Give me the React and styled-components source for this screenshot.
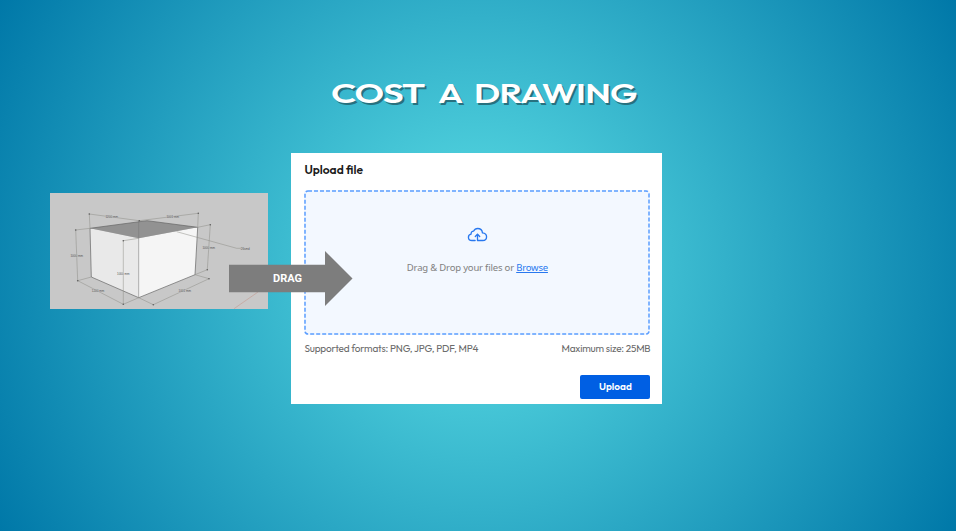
import React from "react";
import styled, { createGlobalStyle } from "styled-components";

const GlobalStyle = createGlobalStyle`
  * { box-sizing: border-box; }
  body { margin: 0; overflow: hidden; }
`;

const Stage = styled.main`
  display: flex;
  flex-direction: column;
  width: 956px;
  height: 531px;
  padding-top: 79px;
  background: radial-gradient(circle farthest-corner at 50% 50%, #5de0e6 0%, #0078a8 100%);
  font-family: Outfit, Lato, "Open Sans", sans-serif;
`;

const Title = styled.h1`
  display: flex;
  gap: 13px;
  height: 30px;
  margin: 0 0 44px 331px;
  font: 600 25.5px/30px Outfit, Inter, sans-serif;
  letter-spacing: -0.5px;
  color: #fff;
  text-shadow: 1.3px 2px 0 #27717f;
`;

const Word = styled.span`
  width: ${(p) => p.$width}px;
  white-space: nowrap;
  transform: scaleX(${(p) => p.$stretch});
  transform-origin: 0 50%;
`;

const Scene = styled.section`
  display: flex;
  align-items: flex-start;
  gap: 23px;
  padding-left: 50px;
`;

const Preview = styled.figure`
  position: relative;
  width: 218px;
  height: 116px;
  margin: 40px 0 0;
  background: #c8c8c8;
`;

const Drawing = styled.svg`
  display: block;
  width: 218px;
  height: 116px;
`;

const Dimension = styled.text`
  font: 3px "Liberation Sans", sans-serif;
  text-anchor: middle;
  fill: #555;
  stroke: ${(p) => p.$halo};
  stroke-width: 0.5px;
  paint-order: stroke;
`;

const DragArrow = styled.div`
  position: absolute;
  z-index: 2;
  left: 179px;
  top: 58px;
  display: flex;
  align-items: center;
  width: 124px;
  height: 55px;
  padding-left: 44px;
  background: #7d7d7d;
  clip-path: polygon(0 13.8px, 96px 13.8px, 96px 0, 123.5px 27.5px, 96px 55px, 96px 41.2px, 0 41.2px);
  font: 700 11px/14px Roboto, sans-serif;
  color: #fff;
`;

const Card = styled.div`
  display: flex;
  flex-direction: column;
  width: 371px;
  height: 251px;
  padding: 9px 11.6px 5px 13.4px;
  background: #fff;
`;

const Heading = styled.h2`
  margin: 0 0 13px;
  font-size: 12px;
  font-weight: 600;
  line-height: 15px;
  color: #1b1b1b;
`;

const DropZone = styled.div`
  position: relative;
  display: flex;
  flex-direction: column;
  align-items: center;
  height: 145px;
  padding-top: 37px;
  background: #f3f8ff;
  border-radius: 3px;
`;

const DashedEdge = styled.svg`
  position: absolute;
  inset: 0;
  width: 346px;
  height: 145px;
`;

const Cloud = styled.svg`
  width: 21px;
  height: 16px;
`;

const Prompt = styled.p`
  margin: 17px 0 0;
  font: 400 9.5px/15px "Noto Sans", sans-serif;
  letter-spacing: -0.18px;
  color: #808080;
`;

const Browse = styled.a`
  color: #2878ef;
  text-decoration: underline;
  text-underline-offset: 1px;
`;

const Hints = styled.div`
  display: flex;
  justify-content: space-between;
  margin-top: 7px;
  font-size: 10px;
  line-height: 14px;
  letter-spacing: -0.19px;
  color: #6c6c6c;
`;

const UploadButton = styled.button`
  align-self: flex-end;
  width: 70px;
  height: 24px;
  margin-top: auto;
  padding: 0;
  border: 0;
  border-radius: 2px;
  background: #005fe3;
  font: 600 10px/24px Outfit, Lato, sans-serif;
  color: #fff;
`;

const labels = [
  [61.7, 25.3, "1200 mm"],
  [122.7, 25, "1001 mm"],
  [26.7, 64, "1000 mm"],
  [73.3, 81.7, "1000 mm", "#e9e9e9"],
  [158.7, 56, "1000 mm"],
  [48, 99.3, "1200 mm"],
  [134.8, 98.5, "1001 mm"],
  [195.3, 56.7, "26smd"],
];

const ends = [
  [39.3, 21], [89.3, 27.7], [148.3, 20.3], [25.7, 37], [27.7, 87.7], [73.3, 47.7],
  [73.3, 111.3], [103.3, 111.7], [159, 85.7], [160.3, 31.7], [157.3, 76.7],
];

export default function App() {
  return (
    <Stage>
      <GlobalStyle />
      <Title>
        <Word $width={94} $stretch={1.45}>COST</Word>
        <Word $width={23} $stretch={1.38}>A</Word>
        <Word $width={163} $stretch={1.38}>DRAWING</Word>
      </Title>
      <Scene>
        <Preview>
          <Drawing viewBox="0 0 218 116">
            <path d="M40 35.3 88.7 45.3V104.7L41.3 84Z" fill="#e9e9e9" />
            <path d="M147.7 34.3 88.7 45.3V104.7L145 81.7Z" fill="#f5f5f5" />
            <path d="M40 35.3 97 27.7 147.7 34.3 88.7 45.3Z" fill="#929292" />
            <path d="M40 35.3 97 27.7 147.7 34.3 145 81.7 88.7 104.7 41.3 84Z" fill="none" stroke="#666" strokeWidth=".7" />
            <path d="M88.7 27.7V104.7" stroke="#777" strokeWidth=".5" />
            <path
              d="M40 35.3 39.3 21 89.3 27.7 148.3 20.3 147.7 34.3M40 35.3 25.7 37 27.7 87.7 41.3 84M27.7 87.7 73.3 111.3 88.7 104.7 103.3 111.7 159 85.7 145 81.7 157.3 76.7 160.3 31.7 147.7 34.3M88.7 45.3 73.3 47.7V111.3M126.7 38.7 186.7 55.3H191"
              fill="none" stroke="#8c8c86" strokeWidth=".5"
            />
            <path d="M184 115.7 208 99" stroke="#c59a90" strokeWidth=".6" />
            {ends.map(([x, y]) => <circle key={`${x}-${y}`} cx={x} cy={y} r=".8" fill="#5d5d5d" />)}
            {labels.map(([x, y, t, halo]) => (
              <Dimension key={`${x}-${y}`} x={x} y={y} $halo={halo || "#c8c8c8"}>{t}</Dimension>
            ))}
          </Drawing>
          <DragArrow>DRAG</DragArrow>
        </Preview>
        <Card>
          <Heading>Upload file</Heading>
          <DropZone>
            <DashedEdge viewBox="0 0 346 145">
              <rect x="1" y="1" width="344" height="143" rx="3" fill="none" stroke="#5b9dff" strokeWidth="1.5" strokeDasharray="4 2" />
            </DashedEdge>
            <Cloud viewBox="0 0 22 16" fill="none" stroke="#2878ef" strokeWidth="1.4" strokeLinecap="round" strokeLinejoin="round">
              <path d="M8.5 13.8H5.2C3 13.8 1.5 12.3 1.5 10.4c0-1.8 1.2-3 2.8-3.3C4.1 5 5.3 3.8 7 3.9 7.8 2.2 9.3 1.2 11.2 1.2c2.8 0 4.7 1.8 5 4.5 2.5.3 4.3 1.8 4.3 4.1 0 2.3-1.7 4-4 4H11V7.3" />
              <path d="M8.7 9.5 11 7.2 13.3 9.5" />
            </Cloud>
            <Prompt>Drag &amp; Drop your files or <Browse>Browse</Browse></Prompt>
          </DropZone>
          <Hints>
            <span>Supported formats: PNG, JPG, PDF, MP4</span>
            <span>Maximum size: 25MB</span>
          </Hints>
          <UploadButton>Upload</UploadButton>
        </Card>
      </Scene>
    </Stage>
  );
}
